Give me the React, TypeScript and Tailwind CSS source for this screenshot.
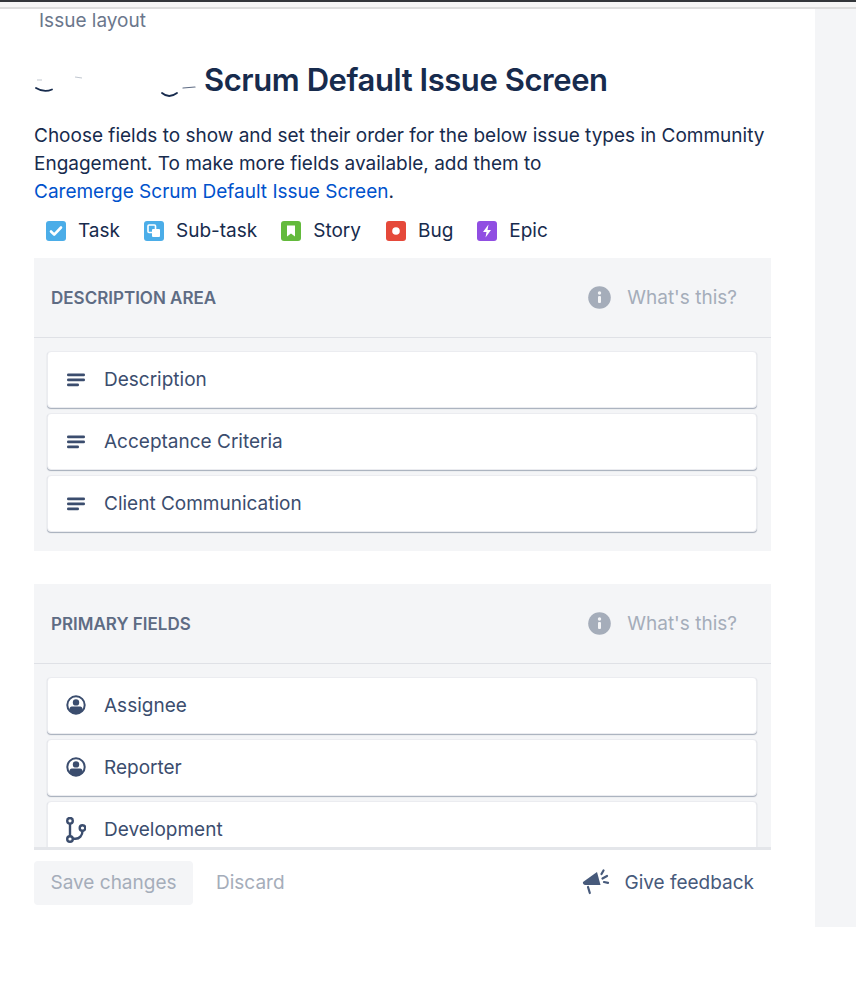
import React from "react";

const Lines = () => (
  <svg width="18" height="14" viewBox="0 0 18 14" className="shrink-0">
    <rect x="0" y="0.400" width="18" height="2.800" rx="1.300" fill="#3b4d6e" />
    <rect x="0" y="5.400" width="18" height="2.800" rx="1.300" fill="#3b4d6e" />
    <rect x="0" y="10.400" width="12" height="2.800" rx="1.300" fill="#3b4d6e" />
  </svg>
);

const Person = () => (
  <svg width="20" height="20" viewBox="0 0 20 20" className="-mt-[2px] shrink-0">
    <circle cx="10" cy="10" r="8.700" fill="none" stroke="#3b4d6e" strokeWidth="2" />
    <circle cx="10" cy="7.400" r="3.200" fill="#3b4d6e" />
    <path d="M3.500 16v-2.200c0-1.300 1-2.300 2.300-2.300h8.400c1.300 0 2.300 1 2.300 2.300V16c-1.600 1.700-4 2.800-6.500 2.800s-4.900-1.100-6.500-2.800z" fill="#3b4d6e" />
  </svg>
);

const Branch = () => (
  <svg width="20" height="26" viewBox="0 0 20 26" className="shrink-0" fill="none" stroke="#3b4d6e" strokeWidth="2.400">
    <circle cx="4" cy="3.800" r="2.800" />
    <circle cx="4" cy="22" r="2.800" />
    <circle cx="16.500" cy="11" r="2.800" />
    <path d="M4 6.600v12.600M6.800 21.800h2.700c3.800 0 7-3 7-8" />
  </svg>
);

const Info = () => (
  <svg width="23" height="23" viewBox="0 0 23 23" className="shrink-0">
    <circle cx="11.500" cy="11.500" r="11.300" fill="#a5adba" />
    <rect x="10" y="10" width="3" height="7" rx="1" fill="#f4f5f7" />
    <circle cx="11.500" cy="7" r="1.700" fill="#f4f5f7" />
  </svg>
);

const Megaphone = () => (
  <svg width="28" height="28" viewBox="0 0 28 28" className="shrink-0">
    <path d="M1 13 15 3l3.500 13H3.500C1.500 16 .5 14.500 1 13z" fill="#475a7b" />
    <path d="M6 18l1.800 6" stroke="#475a7b" strokeWidth="2.200" strokeLinecap="round" fill="none" />
    <path d="M19.500 5 21.500 1.500M20.500 9.500l4.500-2.500M22 13l4 .8" stroke="#475a7b" strokeWidth="2.200" strokeLinecap="round" fill="none" />
  </svg>
);

const Badge = ({ bg, children }: { bg: string; children: React.ReactNode }) => (
  <span className={`flex h-[20px] w-[20px] shrink-0 items-center justify-center rounded-[3px] ${bg}`}>
    <svg width="20" height="20" viewBox="0 0 20 20">{children}</svg>
  </span>
);

const types: [string, string, React.ReactNode, string][] = [
  ["Task", "bg-[#4bade8]", <path key="t" d="M5 10.500l3.200 3.200 6.800-7.200" fill="none" stroke="#fff" strokeWidth="2.600" strokeLinecap="round" strokeLinejoin="round" />, "mr-[24px]"],
  ["Sub-task", "bg-[#4bade8]", <g key="s"><rect x="4" y="4" width="7.500" height="7.500" rx="1" fill="none" stroke="#fff" strokeWidth="1.600" /><rect x="8" y="8" width="8" height="8" rx="1" fill="#fff" /></g>, "mr-[24px]"],
  ["Story", "bg-[#63ba3c]", <path key="b" d="M6 4.500h8v11l-4-3-4 3z" fill="#fff" />, "mr-[25px]"],
  ["Bug", "bg-[#e5493a]", <circle key="c" cx="10" cy="10" r="3.800" fill="#fff" />, "mr-[24px]"],
  ["Epic", "bg-[#904ee2]", <path key="e" d="M11.500 3.500 6 11h3.500l-1 5.500L14 9h-3.500z" fill="#fff" />, ""],
];

const Field = ({ icon, label }: { icon: React.ReactNode; label: string }) => (
  <div className="flex h-[57px] shrink-0 items-center rounded-[4px] border border-[#ebecf0] bg-white shadow-[0_1px_1px_#a5adba]">
    <span className="flex w-[56px] shrink-0 items-center justify-center">{icon}</span>
    <span className="text-[#3b4d6e]">{label}</span>
  </div>
);

const SectionHead = ({ title }: { title: string }) => (
  <div className="flex h-[80px] shrink-0 items-center justify-between border-b border-[#dfe1e6] pl-[17px] pr-[34px]">
    <span className="text-[17px] font-semibold text-[#5e6c84]">{title}</span>
    <span className="flex items-center gap-[16px] text-[#a5adba]">
      <Info />
      <span>What's this?</span>
    </span>
  </div>
);

export default function App() {
  return (
    <div className="h-[999px] w-[856px] overflow-hidden bg-white font-['Inter',sans-serif] text-[19px] leading-[28px]">
      <div className="h-[9px] border-b-[2px] border-t-[2px] border-b-[#dddddd] border-t-[#33363a] bg-[#f6f6f6]" />
      <div className="flex h-[918px]">
        <main className="flex w-[815px] flex-col pl-[34px] pr-[44px]">
          <div className="h-[23px] pl-[5px] leading-[23px] text-[#6b778c]">Issue layout</div>
          <h1 className="mt-[28px] flex h-[40px] items-center text-[31px] font-semibold leading-[40px] tracking-[-0.43px] text-[#172b4d]">
            <svg width="170" height="40" viewBox="0 0 170 40" className="shrink-0">
              <path d="M2 28q8 5 16 1.500M128 33q7 6 15 0" fill="none" stroke="#172b4d" strokeWidth="1.800" strokeLinecap="round" />
              <path d="M149 28l12-1" fill="none" stroke="#5e6c84" strokeWidth="1.200" strokeLinecap="round" />
              <path d="M3 20h5M41 17l7 1" stroke="#c1c7d0" strokeWidth="1.200" />
            </svg>
            <span>Scrum Default Issue Screen</span>
          </h1>
          <p className="mt-[22px] text-[#172b4d]">
            Choose fields to show and set their order for the below issue types in Community
            <br />
            Engagement. To make more fields available, add them to
            <br />
            <a className="text-[#0052cc]">Caremerge Scrum Default Issue Screen</a>.
          </p>
          <div className="mt-[11px] flex h-[28px] items-center pl-[12px] text-[#172b4d]">
            {types.map(([name, bg, glyph, mr]) => (
              <span key={name} className={`flex items-center gap-[12px] ${mr}`}>
                <Badge bg={bg}>{glyph}</Badge>
                <span>{name}</span>
              </span>
            ))}
          </div>
          <section className="mt-[13px] flex h-[293px] flex-col bg-[#f4f5f7]">
            <SectionHead title="DESCRIPTION AREA" />
            <div className="flex flex-col gap-[5px] pl-[13px] pr-[14px] pt-[13px]">
              <Field icon={<Lines />} label="Description" />
              <Field icon={<Lines />} label="Acceptance Criteria" />
              <Field icon={<Lines />} label="Client Communication" />
            </div>
          </section>
          <section className="mt-[33px] flex h-[266px] flex-col overflow-hidden border-b-[3px] border-[#e4e6ea] bg-[#f4f5f7]">
            <SectionHead title="PRIMARY FIELDS" />
            <div className="flex flex-col gap-[5px] pl-[13px] pr-[14px] pt-[13px]">
              <Field icon={<Person />} label="Assignee" />
              <Field icon={<Person />} label="Reporter" />
              <Field icon={<Branch />} label="Development" />
            </div>
          </section>
          <div className="mt-[11px] flex items-center">
            <button className="h-[44px] w-[159px] rounded-[4px] bg-[#f4f5f7] text-[#a5adba]">Save changes</button>
            <span className="ml-[23px] text-[#a5adba]">Discard</span>
            <span className="ml-auto mr-[17px] flex items-center gap-[14px] text-[#475a7b]">
              <Megaphone />
              <span>Give feedback</span>
            </span>
          </div>
        </main>
        <aside className="w-[41px] bg-[#f4f5f7]" />
      </div>
    </div>
  );
}
